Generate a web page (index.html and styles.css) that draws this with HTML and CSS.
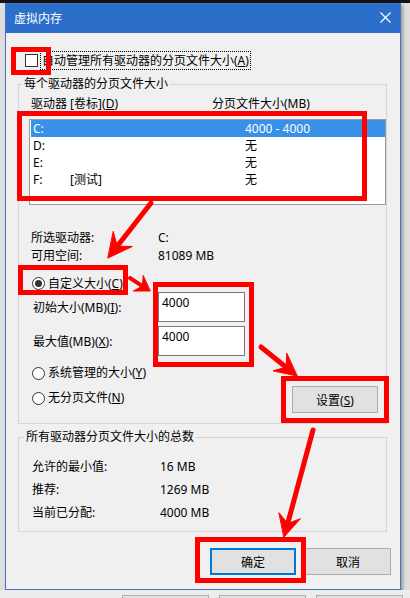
FILE: index.html
```html
<!DOCTYPE html>
<html lang="zh-CN">
<head>
	<meta charset="UTF-8">
	<title>虚拟内存</title>
	<link rel="stylesheet" href="styles.css">
</head>
<body>
	<div class="screen">
		<div class="topbar"></div>
		<div class="desk">
			<div class="window">
				<div class="titlebar">
					<span class="title">虚拟内存</span>
					<svg class="close" width="11" height="11" viewBox="0 0 11 11"><path d="M0.5 0.5L10.5 10.5M10.5 0.5L0.5 10.5" stroke="#fff" stroke-width="1.1" fill="none"/></svg>
				</div>
				<div class="content">
					<!--自动管理-->
					<div class="autorow">
						<span class="checkbox"></span>
						<span class="focuslabel">自动管理所有驱动器的分页文件大小(<u>A</u>)</span>
					</div>
					<!--每个驱动器-->
					<fieldset class="group g1">
						<legend>每个驱动器的分页文件大小</legend>
						<div class="colhead">
							<span class="ch1">驱动器 [卷标](<u>D</u>)</span>
							<span>分页文件大小(MB)</span>
						</div>
						<div class="listbox">
							<div class="lrow sel"><span>C:</span><span></span><span>4000 - 4000</span></div>
							<div class="lrow"><span>D:</span><span></span><span>无</span></div>
							<div class="lrow"><span>E:</span><span></span><span>无</span></div>
							<div class="lrow"><span>F:</span><span>[测试]</span><span>无</span></div>
						</div>
						<div class="info">
							<span>所选驱动器:</span><span>C:</span>
							<span>可用空间:</span><span>81089 MB</span>
						</div>
						<div class="radio custom"><span class="dot on"></span><span>自定义大小(<u>C</u>)</span></div>
						<div class="field">
							<span class="flabel">初始大小(MB)(<u>I</u>):</span>
							<div class="textbox">4000</div>
						</div>
						<div class="field">
							<span class="flabel">最大值(MB)(<u>X</u>):</span>
							<div class="textbox">4000</div>
						</div>
						<div class="lower">
							<div class="radios">
								<div class="radio"><span class="dot"></span><span>系统管理的大小(<u>Y</u>)</span></div>
								<div class="radio"><span class="dot"></span><span>无分页文件(<u>N</u>)</span></div>
							</div>
							<button class="btn set">设置(<u>S</u>)</button>
						</div>
					</fieldset>
					<!--总数-->
					<fieldset class="group g2">
						<legend>所有驱动器分页文件大小的总数</legend>
						<div class="totals">
							<span>允许的最小值:</span><span>16 MB</span>
							<span>推荐:</span><span>1269 MB</span>
							<span>当前已分配:</span><span>4000 MB</span>
						</div>
					</fieldset>
					<div class="actions">
						<button class="btn default">确定</button>
						<button class="btn">取消</button>
					</div>
				</div>
			</div>
		</div>
		<div class="behind">
			<span></span><span></span><span></span>
		</div>
		<!--红色标注-->
		<svg class="marks" width="410" height="598" viewBox="0 0 410 598">
			<g fill="none" stroke="#f00" stroke-width="5">
				<rect x="13.5" y="49.5" width="35" height="23"/>
				<rect x="19.5" y="113.5" width="345" height="85"/>
				<rect x="20.5" y="267.5" width="105" height="25"/>
				<rect x="155.5" y="284.5" width="96" height="80"/>
				<rect x="283.5" y="378.5" width="103" height="42"/>
				<rect x="197.5" y="539.5" width="106" height="41"/>
			</g>
			<g stroke="#f00" stroke-width="5" stroke-linecap="round" fill="#f00">
				<line x1="151" y1="203" x2="117.2" y2="246.2"/>
				<polygon stroke-width="1" points="108,258 132.3,246.5 117.2,246.2 113.3,231.7"/>
				<line x1="130" y1="278" x2="142.4" y2="286.1" stroke-width="4"/>
				<polygon stroke-width="1" points="150,291 133.4,291 142.4,286.1 143.2,275.8"/>
				<line x1="261" y1="347" x2="286.1" y2="367.2"/>
				<polygon stroke-width="1" points="297,376 273,370.8 286.1,367.2 286.8,353.6"/>
				<line x1="313" y1="430" x2="287.7" y2="523.5"/>
				<polygon stroke-width="1" points="284,537 300.4,518.7 287.7,523.5 279.1,512.9"/>
			</g>
		</svg>
	</div>
</body>
</html>
```

FILE: styles.css
```css
body{
	margin:0;
	font-family:"Noto Sans","Noto Sans CJK SC",sans-serif;
	font-size:12px;
	color:#000;
}
.screen{
	position:relative;
	width:410px;
	height:598px;
	overflow:hidden;
	background:#dedede;
}
.topbar{
	height:3px;
	background:#141414;
}
.desk{
	padding-left:5px;
	height:587px;
}
/*窗口*/
.window{
	width:396px;
	height:587px;
	box-sizing:border-box;
	border:1px solid #4274c0;
	background:#f0f0f0;
	box-shadow:2px 2px 3px rgba(0,0,0,.3);
}
.titlebar{
	height:29px;
	background:#2b6fca;
	color:#fff;
	display:flex;
	align-items:center;
	justify-content:space-between;
	padding:0 9px 2px 8px;
	box-sizing:border-box;
}
.content{
	padding:0 13px 0 12px;
}
u{
	text-decoration:underline;
	text-underline-offset:1px;
}
/*复选框*/
.autorow{
	margin-top:18px;
	height:19px;
	display:flex;
	align-items:center;
	padding-left:7px;
}
.checkbox{
	width:13px;
	height:13px;
	box-sizing:border-box;
	border:1px solid #333;
	background:#fff;
	margin-right:2px;
}
.focuslabel{
	border:1px dotted #000;
	padding:0 1px;
	line-height:17px;
}
/*分组框*/
.group{
	margin:0;
	border:1px solid #d5d5d5;
	padding:0 0 10px 12px;
	min-width:0;
}
.group legend{
	padding:0 2px;
	margin-left:-9px;
	line-height:16px;
}
.g1{
	margin-top:6px;
}
.g2{
	margin-top:5px;
	padding-bottom:7px;
}
.g2 legend{
	margin-left:-7px;
}
.colhead{
	margin-top:4px;
	display:flex;
	line-height:16px;
}
.ch1{
	width:181px;
}
/*列表*/
.listbox{
	margin:7px 0 0 -2px;
	height:86px;
	box-sizing:border-box;
	border:1px solid #9a9a9a;
	background:#fff;
}
.lrow{
	display:grid;
	grid-template-columns:37px 175px 1fr;
	height:17px;
	line-height:17px;
	margin-left:1px;
	padding-left:2px;
}
.lrow.sel{
	background:#3890e8;
	color:#fff;
}
.info{
	margin-top:24px;
	display:grid;
	grid-template-columns:127px 1fr;
	line-height:18px;
}
/*单选*/
.radio{
	display:flex;
	align-items:center;
	gap:3px;
	margin-left:1px;
	height:17px;
	line-height:17px;
}
.custom{
	margin-top:10px;
}
.dot{
	width:13px;
	height:13px;
	box-sizing:border-box;
	border:1px solid #333;
	border-radius:50%;
	background:#fff;
	display:flex;
	align-items:center;
	justify-content:center;
}
.dot.on::after{
	content:"";
	width:7px;
	height:7px;
	border-radius:50%;
	background:#333;
}
.field{
	display:flex;
	align-items:center;
	height:30px;
}
.field+.field{
	margin-top:4px;
}
.flabel{
	width:125px;
	padding-left:2px;
}
.textbox{
	width:87px;
	height:30px;
	box-sizing:border-box;
	border:1px solid #7a7a7a;
	background:#fff;
	padding:2px 3px;
	line-height:16px;
}
.lower{
	margin-top:8px;
	display:flex;
	justify-content:space-between;
	align-items:flex-start;
}
.radios{
	display:flex;
	flex-direction:column;
	gap:7px;
}
.radios .radio{
	height:18px;
	line-height:18px;
}
/*按钮*/
.btn{
	width:86px;
	height:27px;
	box-sizing:border-box;
	border:1px solid #adadad;
	background:#e1e1e1;
	font:inherit;
	color:#000;
	padding:0;
}
.set{
	margin-top:22px;
	margin-right:8px;
}
.totals{
	margin-top:10px;
	padding-left:1px;
	display:grid;
	grid-template-columns:128px 1fr;
	line-height:23px;
}
.actions{
	margin:16px -4px 0 0;
	display:flex;
	justify-content:flex-end;
	gap:9px;
}
.btn.default{
	border:2px solid #0078d7;
}
/*下方窗口*/
.behind{
	height:8px;
	background:#ececec;
	display:flex;
	gap:10px;
	padding:5px 0 0 122px;
	box-sizing:border-box;
}
.behind span{
	width:85px;
	height:10px;
	border:1px solid #adadad;
	background:#e1e1e1;
}
.marks{
	position:absolute;
	left:0;
	top:0;
	pointer-events:none;
}
```
